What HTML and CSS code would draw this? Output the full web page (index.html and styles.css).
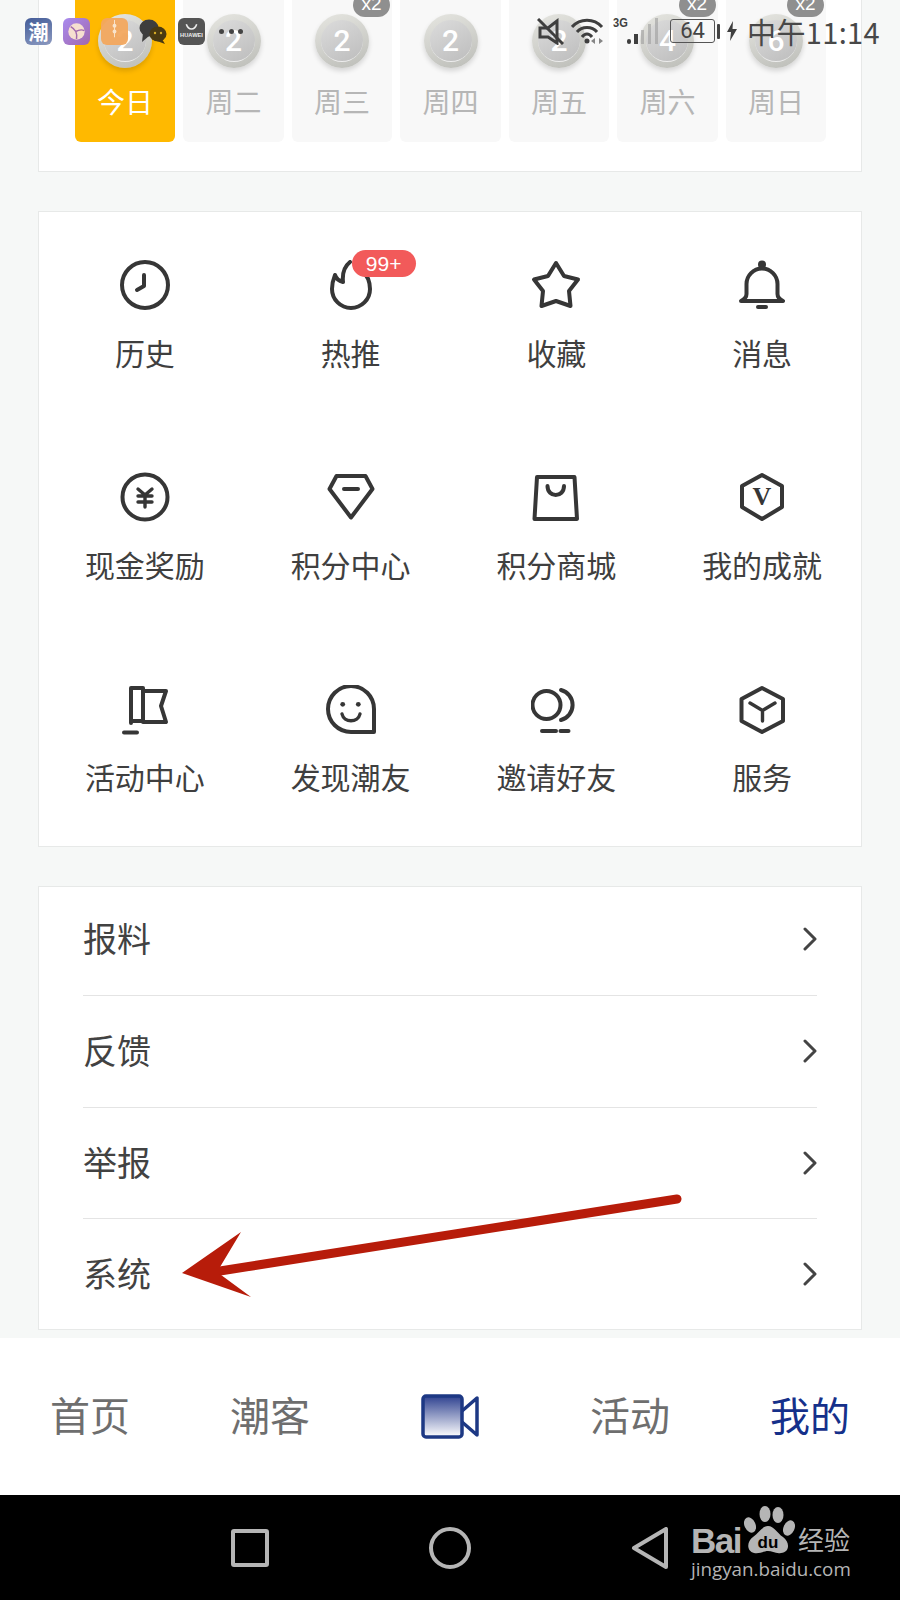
FILE: index.html
```html
<!DOCTYPE html>
<html lang="zh">
<head>
<meta charset="utf-8">
<title>我的</title>
<link rel="stylesheet" href="styles.css">
</head>
<body>
<div class="screen">
  <main class="content">
    <section class="card week">
      <div class="day today"><div class="coin"><span class="coin-face">2</span></div><div class="day-label">今日</div></div>
      <div class="day"><div class="coin"><span class="coin-face">2</span></div><div class="day-label">周二</div></div>
      <div class="day"><span class="times">x2</span><div class="coin"><span class="coin-face">2</span></div><div class="day-label">周三</div></div>
      <div class="day"><div class="coin"><span class="coin-face">2</span></div><div class="day-label">周四</div></div>
      <div class="day"><div class="coin"><span class="coin-face">2</span></div><div class="day-label">周五</div></div>
      <div class="day"><span class="times">x2</span><div class="coin"><span class="coin-face">4</span></div><div class="day-label">周六</div></div>
      <div class="day"><span class="times">x2</span><div class="coin"><span class="coin-face">6</span></div><div class="day-label">周日</div></div>
    </section>

    <section class="card tools">
      <div class="tool"><svg class="ico" viewBox="0 0 50 50"><circle cx="25" cy="25" r="23"/><path d="M24 15V26L17 30"/></svg><div class="tool-label">历史</div></div>
      <div class="tool"><div class="ico-wrap"><svg class="ico" viewBox="0 0 50 50"><path d="M24 2C19 6 16 12 17 22C13 21 10 18 9 15C7 20 6 24 6 29A19 19 0 0 0 44 29C44 20 40 14 36 10"/></svg><span class="badge">99+</span></div><div class="tool-label">热推</div></div>
      <div class="tool"><svg class="ico" viewBox="0 0 50 50"><path d="M25 3L33 16L47 19.500L38 31L39.500 46L25 41L10.500 46L12 31L3 19.500L17 16Z"/></svg><div class="tool-label">收藏</div></div>
      <div class="tool"><svg class="ico" viewBox="0 0 50 50"><circle class="solid" cx="25" cy="4.500" r="4"/><path d="M9.500 34V24A15.500 15.500 0 0 1 40.500 24V34C40.500 37 42 39 46 41H4C8 39 9.500 37 9.500 34Z"/><path d="M21 47H29"/></svg><div class="tool-label">消息</div></div>

      <div class="tool"><svg class="ico" viewBox="0 0 50 50"><circle cx="25" cy="25" r="22.500"/><path class="thick" d="M18 17L25 23L32 17M18 24H32M18 30H32M25 23V35"/></svg><div class="tool-label">现金奖励</div></div>
      <div class="tool"><svg class="ico" viewBox="0 0 50 50"><path d="M10.500 4H39.500L46.500 17L25 45.500L3.500 17Z"/><path d="M18 17H32"/></svg><div class="tool-label">积分中心</div></div>
      <div class="tool"><svg class="ico" viewBox="0 0 50 50"><path d="M6 5H43.500L46 47H3.500Z"/><path d="M16.500 14C16.500 26 33 26 33 14"/></svg><div class="tool-label">积分商城</div></div>
      <div class="tool"><svg class="ico" viewBox="0 0 50 50"><path d="M25 3L45 14V35L25 47L5 35V14Z"/><text class="v-mark" x="25" y="33" text-anchor="middle">V</text></svg><div class="tool-label">我的成就</div></div>

      <div class="tool"><svg class="ico" viewBox="0 0 50 50"><path d="M11 38V3H23V36H11"/><path d="M23 6H46L41 21L46 37H23"/><path d="M4 47.500H17"/></svg><div class="tool-label">活动中心</div></div>
      <div class="tool"><svg class="ico" viewBox="0 0 50 50"><path d="M48 47H25A23 23 0 1 1 48 24Z"/><circle class="solid" cx="16.700" cy="19.300" r="2.400"/><circle class="solid" cx="32.300" cy="19.300" r="2.400"/><path class="thick" d="M16 29C18 38 32 38 34 29"/></svg><div class="tool-label">发现潮友</div></div>
      <div class="tool"><svg class="ico" viewBox="0 0 50 50"><circle cx="15.500" cy="20" r="14"/><path d="M30 5A15.500 15.500 0 0 1 30 35"/><path d="M11 46H25M29.500 46H37.500"/></svg><div class="tool-label">邀请好友</div></div>
      <div class="tool"><svg class="ico" viewBox="0 0 50 50"><path d="M25 3L46 14V36L25 47L4.500 36V14Z"/><path class="thick" d="M13 18L25.500 25.500L38 18M25.500 25.500V36"/></svg><div class="tool-label">服务</div></div>
    </section>

    <section class="card links">
      <div class="row"><span class="row-text">报料</span><svg class="chev" viewBox="0 0 14 24"><path d="M2 2L12 12L2 22"/></svg></div>
      <div class="row"><span class="row-text">反馈</span><svg class="chev" viewBox="0 0 14 24"><path d="M2 2L12 12L2 22"/></svg></div>
      <div class="row"><span class="row-text">举报</span><svg class="chev" viewBox="0 0 14 24"><path d="M2 2L12 12L2 22"/></svg></div>
      <div class="row"><span class="row-text">系统</span><svg class="chev" viewBox="0 0 14 24"><path d="M2 2L12 12L2 22"/></svg></div>
    </section>
  </main>

  <nav class="tabbar">
    <div class="tab">首页</div>
    <div class="tab">潮客</div>
    <div class="tab tab-icon">
      <svg class="video" viewBox="0 0 58 45">
        <defs><linearGradient id="videoFill" x1="0" y1="0" x2="0" y2="1"><stop offset="0" stop-color="#2f4290"/><stop offset="1" stop-color="#ffffff"/></linearGradient></defs>
        <path class="video-lens" d="M41 17L56 4V41L41 28"/>
        <rect class="video-body" x="2" y="2" width="39" height="41" rx="3"/>
      </svg>
    </div>
    <div class="tab">活动</div>
    <div class="tab tab-on">我的</div>
  </nav>

  <footer class="navbar">
    <span class="nav-square"></span>
    <span class="nav-circle"></span>
    <svg class="nav-back" viewBox="0 0 42 42"><path d="M37 2V40L5 21Z"/></svg>
    <div class="baidu">
      <div class="baidu-top">
        <span class="bai">Bai</span>
        <svg class="paw" viewBox="0 0 56 50">
          <ellipse cx="25" cy="9" rx="5.500" ry="8"/>
          <ellipse cx="38" cy="10" rx="5.500" ry="8" />
          <ellipse cx="10" cy="20" rx="5.500" ry="8" transform="rotate(-25 10 20)"/>
          <ellipse cx="49" cy="23" rx="5.500" ry="8" transform="rotate(25 49 23)"/>
          <path d="M28 21C34 21 37 28 43 32C50 37 50 47 41 48C36 49 32 46 28 46C24 46 20 49 14 48C6 46 7 36 13 32C19 28 22 21 28 21Z"/>
          <text class="paw-du" x="28" y="43" text-anchor="middle">du</text>
        </svg>
        <span class="jy">经验</span>
      </div>
      <div class="baidu-url">jingyan.baidu.com</div>
    </div>
  </footer>

  <div class="status">
    <div class="apps">
      <span class="app app-chao">潮</span>
      <span class="app app-globe"><svg viewBox="0 0 28 28"><circle class="globe" cx="14" cy="14" r="8.500"/><path class="globe-line" d="M8 9C13 12 15 15 14 22M13 14C17 12 20 12 22 13"/></svg></span>
      <span class="app app-box"><svg viewBox="0 0 28 28"><circle class="box-dot" cx="14" cy="8" r="2"/><circle class="box-dot" cx="14" cy="14" r="2"/><path class="box-line" d="M14 2V20"/></svg></span>
      <svg class="wechat" viewBox="0 0 28 26"><ellipse cx="10" cy="10" rx="9.500" ry="8.500"/><path d="M4 15L3 24L10 18Z"/><ellipse class="wechat-b" cx="19" cy="16" rx="8.500" ry="7.500"/><path class="wechat-b" d="M23 21L26 26L18 23Z"/><circle class="wechat-eye" cx="16" cy="15" r="1.200"/><circle class="wechat-eye" cx="22" cy="15" r="1.200"/></svg>
      <span class="app app-huawei"><svg viewBox="0 0 26 26"><path class="hw-smile" d="M8 6C10 12 16 12 18 6"/><text class="hw-text" x="13" y="18" text-anchor="middle">HUAWEI</text></svg></span>
      <span class="more"><i></i><i></i><i></i></span>
    </div>
    <div class="sys">
      <svg class="mute" viewBox="0 0 27 27"><path d="M20 3L11 10H3V19H11L20 25Z"/><path d="M1 1L26 26"/></svg>
      <svg class="wifi" viewBox="0 0 33 26"><path d="M1 9C9 0 23 0 31 9"/><path d="M6 14C11 8 21 8 26 14"/><path d="M11 19C14 15 18 15 21 19"/><circle class="wifi-dot" cx="16" cy="23" r="2.500"/><path class="wifi-arrow" d="M20 23L24 20V26ZM32 23L28 20V26Z"/></svg>
      <div class="net"><span class="net-3g">3G</span><svg class="signal" viewBox="0 0 32 28"><rect x="0" y="21" width="4" height="5" rx="2"/><rect x="7" y="16" width="4" height="10"/><rect class="sig-off" x="14" y="12" width="3" height="14"/><rect class="sig-off" x="21" y="6" width="3" height="20"/><rect class="sig-off" x="28" y="0" width="3" height="26"/></svg></div>
      <div class="battery"><span class="battery-body">64</span><span class="battery-cap"></span></div>
      <svg class="bolt" viewBox="0 0 10 20"><path d="M6 0L0 11H4L3 20L10 8H5.500Z"/></svg>
      <span class="clock">中午11:14</span>
    </div>
  </div>

  <svg class="arrow" viewBox="0 0 900 1600">
    <path class="arrow-line" d="M677 1199L220 1271"/>
    <path class="arrow-head" d="M182 1273L241 1232L217 1272L251 1297Z"/>
  </svg>
</div>
</body>
</html>
```

FILE: styles.css
```css
* { box-sizing: border-box; }

html, body {
  margin: 0;
  padding: 0;
}

body {
  width: 900px;
  height: 1600px;
  overflow: hidden;
  font-family: "Noto Sans CJK SC", "Liberation Sans", sans-serif;
  color: #3f3f3f;
  background: #f6f8f7;
}

.screen {
  position: relative;
  width: 900px;
  height: 1600px;
  overflow: hidden;
  display: flex;
  flex-direction: column;
}

.content {
  height: 1338px;
  padding: 0 38px;
}

.card {
  background: #fff;
  border: 1px solid #e7e9e8;
}

/* check-in week */
.week {
  height: 172px;
  border-top: 0;
  padding: 0 35px 0 36px;
  display: grid;
  grid-template-columns: repeat(7, 1fr);
  column-gap: 8.4px;
  align-items: start;
}

.day {
  position: relative;
  height: 142px;
  padding-top: 14px;
  background: #f8f8f8;
  border-radius: 0 0 6px 6px;
  display: flex;
  flex-direction: column;
  align-items: center;
}

.today { background: #ffb900; }

.coin {
  width: 54px;
  height: 54px;
  border-radius: 50%;
  background: linear-gradient(160deg, #e6e6e1, #bcbdb8);
  box-shadow: 0 3px 5px rgba(0, 0, 0, 0.14);
  display: flex;
  align-items: center;
  justify-content: center;
}

.coin-face {
  width: 42px;
  height: 42px;
  border-radius: 50%;
  background: linear-gradient(150deg, #dcdcdc, #bdbdbd);
  border-bottom: 1px solid #ececec;
  color: #fff;
  font: 500 30px/42px "Roboto", "Liberation Sans", sans-serif;
  text-align: center;
}

.day-label {
  margin-top: 13px;
  font-size: 28px;
  line-height: 40px;
  color: #b6b6b6;
}

.today .day-label { color: #fff; }

.times {
  position: absolute;
  top: -7px;
  right: 2px;
  width: 37px;
  height: 24px;
  border-radius: 12px;
  background: #8f8f8f;
  color: #fff;
  font: 400 19px/22px "Liberation Sans", sans-serif;
  text-align: center;
}

/* tool grid */
.tools {
  margin-top: 39px;
  height: 636px;
  padding: 48px 0 47px 7px;
  display: grid;
  grid-template-columns: repeat(4, 1fr);
  column-gap: 8px;
  row-gap: 98.4px;
}

.tool {
  height: 114px;
  display: flex;
  flex-direction: column;
  align-items: center;
}

.ico-wrap {
  position: relative;
  width: 50px;
  height: 50px;
}

.ico {
  display: block;
  flex: none;
  width: 50px;
  height: 50px;
  fill: none;
  stroke: #363636;
  stroke-width: 4;
  stroke-linecap: round;
  stroke-linejoin: round;
}

.ico .thick { stroke-width: 3.4; }
.ico .solid { fill: #363636; stroke: none; }

.v-mark {
  fill: #363636;
  stroke: none;
  font: 700 26px "Liberation Serif", serif;
}

.badge {
  position: absolute;
  left: 26px;
  top: -10px;
  width: 64px;
  height: 27px;
  border-radius: 14px;
  background: #f25a5a;
  color: #fff;
  font: 400 21px/27px "Liberation Sans", sans-serif;
  text-align: center;
}

.tool-label {
  margin-top: 21.5px;
  font-size: 30px;
  line-height: 40px;
  white-space: nowrap;
  color: #3f3f3f;
}

/* link list */
.links {
  margin-top: 39px;
  height: 444px;
  padding: 0 44px;
}

.row {
  height: 111.5px;
  display: flex;
  align-items: center;
  justify-content: space-between;
  border-bottom: 1px solid #e4e4e4;
  font-size: 34px;
  color: #424242;
}

.row:first-child {
  height: 109px;
  padding-bottom: 5px;
}

.row:last-child {
  height: 110px;
  border-bottom: 0;
}

.row-text {
  line-height: 46px;
  margin-bottom: 2px;
}

.chev {
  width: 14px;
  height: 24px;
  fill: none;
  stroke: #444;
  stroke-width: 3;
  stroke-linecap: round;
  stroke-linejoin: round;
}

/* bottom tabs */
.tabbar {
  height: 157px;
  background: #fff;
  display: grid;
  grid-template-columns: repeat(5, 180px);
  align-items: center;
  justify-items: center;
}

.tab {
  font-size: 40px;
  line-height: 50px;
  margin-bottom: 6px;
  color: #6e6e6e;
  display: flex;
  align-items: center;
}

.tab-icon { margin-bottom: 0; }

.tab-on { color: #15308a; }

.video {
  width: 58px;
  height: 45px;
  display: block;
}

.video-body {
  fill: url(#videoFill);
  stroke: #1d3884;
  stroke-width: 3.5;
}

.video-lens {
  fill: #fff;
  stroke: #1d3884;
  stroke-width: 3.5;
  stroke-linejoin: round;
}

/* system nav */
.navbar {
  position: relative;
  height: 105px;
  background: #000;
  display: flex;
  align-items: center;
  justify-content: center;
  gap: 158px;
}

.nav-square {
  width: 38px;
  height: 38px;
  margin: 0 2px;
  border: 4px solid #b5b5b5;
  border-radius: 3px;
}

.nav-circle {
  width: 42px;
  height: 42px;
  border: 4px solid #b5b5b5;
  border-radius: 50%;
}

.nav-back {
  width: 42px;
  height: 42px;
  fill: none;
  stroke: #b5b5b5;
  stroke-width: 4;
  stroke-linejoin: round;
}

.baidu {
  position: absolute;
  left: 691px;
  top: 10px;
  width: 165px;
  color: #b5b5b5;
}

.baidu-top {
  display: flex;
  align-items: flex-end;
  height: 50px;
}

.bai {
  font: 700 35px/28px "Liberation Sans", sans-serif;
  letter-spacing: -1.5px;
}

.paw {
  width: 56px;
  height: 50px;
  margin-left: -1px;
  flex: none;
  fill: #b5b5b5;
}

.paw-du {
  fill: #000;
  font: 700 17px "Liberation Sans", sans-serif;
}

.jy {
  margin-left: 2px;
  font-size: 26px;
  line-height: 32px;
  font-weight: 400;
  white-space: nowrap;
}

.baidu-url {
  margin-top: 2px;
  font: 400 18.800px/24px "Open Sans", "Liberation Sans", sans-serif;
  white-space: nowrap;
}

/* status bar overlay */
.status {
  position: absolute;
  left: 25px;
  right: 20px;
  top: 16px;
  height: 30px;
  display: flex;
  justify-content: space-between;
  align-items: center;
  color: #484848;
}

.apps {
  display: flex;
  align-items: center;
  gap: 11px;
}

.app {
  display: block;
  width: 27px;
  height: 27px;
  border-radius: 6px;
  overflow: hidden;
}

.app svg {
  display: block;
  width: 100%;
  height: 100%;
}

.app-chao {
  background: linear-gradient(160deg, #435c98, #8c9ac0);
  color: #fff;
  font-size: 20px;
  line-height: 27px;
  text-align: center;
  font-weight: 700;
}

.app-globe { background: linear-gradient(135deg, #a98bef, #a268ad); }
.globe { fill: #f6dfd0; }
.globe-line { fill: none; stroke: #a268ad; stroke-width: 1.500; }

.app-box { background: #f3a85f; opacity: 0.95; }
.box-dot { fill: #fbe5cc; }
.box-line { stroke: #fbe5cc; stroke-width: 1; }

.wechat {
  width: 28px;
  height: 26px;
  fill: #3d3d3d;
}

.wechat-b { fill: #4a3a12; }
.wechat-eye { fill: #d5ad28; }

.app-huawei { background: #555; }
.hw-smile { fill: none; stroke: #eee; stroke-width: 1.500; }
.hw-text { fill: #eee; font: 700 5.500px "Liberation Sans", sans-serif; }

.more {
  display: flex;
  gap: 4.500px;
  margin-left: 3px;
}

.more i {
  width: 5px;
  height: 5px;
  border-radius: 50%;
  background: #444;
}

.sys {
  display: flex;
  align-items: center;
}

.mute {
  width: 27px;
  height: 27px;
  fill: none;
  stroke: #3f3f3f;
  stroke-width: 3;
}

.wifi {
  width: 33px;
  height: 26px;
  margin-left: 7px;
  fill: none;
  stroke: #3f3f3f;
  stroke-width: 3;
}

.wifi-dot { fill: #3f3f3f; stroke: none; }
.wifi-arrow { fill: #555; stroke: none; opacity: 0.7; }

.net {
  position: relative;
  width: 46px;
  height: 28px;
  margin-left: 9px;
}

.net-3g {
  position: absolute;
  left: 0;
  top: -2px;
  font: 700 13px/15px "Liberation Sans", sans-serif;
  transform: scaleX(0.85);
  transform-origin: left top;
  color: #3f3f3f;
}

.signal {
  position: absolute;
  left: 14px;
  top: 1px;
  width: 32px;
  height: 28px;
  fill: #3f3f3f;
}

.sig-off { fill: #9d9d9d; opacity: 0.6; }

.battery {
  display: flex;
  align-items: center;
  gap: 2px;
  margin-left: 11px;
}

.battery-body {
  width: 45px;
  height: 24px;
  border: 1.500px solid #555;
  border-radius: 3px;
  font: 400 22px/21px "Roboto", "Liberation Sans", sans-serif;
  text-align: center;
  color: #444;
}

.battery-cap {
  width: 3px;
  height: 15px;
  border-radius: 1px;
  background: #444;
}

.bolt {
  width: 10px;
  height: 20px;
  margin-left: 7px;
  fill: #3f3f3f;
}

.clock {
  margin-left: 10px;
  font-size: 29px;
  line-height: 30px;
  letter-spacing: 0.35px;
  white-space: nowrap;
}

/* annotation arrow */
.arrow {
  position: absolute;
  left: 0;
  top: 0;
  width: 900px;
  height: 1600px;
  pointer-events: none;
}

.arrow-line {
  fill: none;
  stroke: #b71c0a;
  stroke-width: 9;
  stroke-linecap: round;
}

.arrow-head { fill: #b71c0a; }
```
